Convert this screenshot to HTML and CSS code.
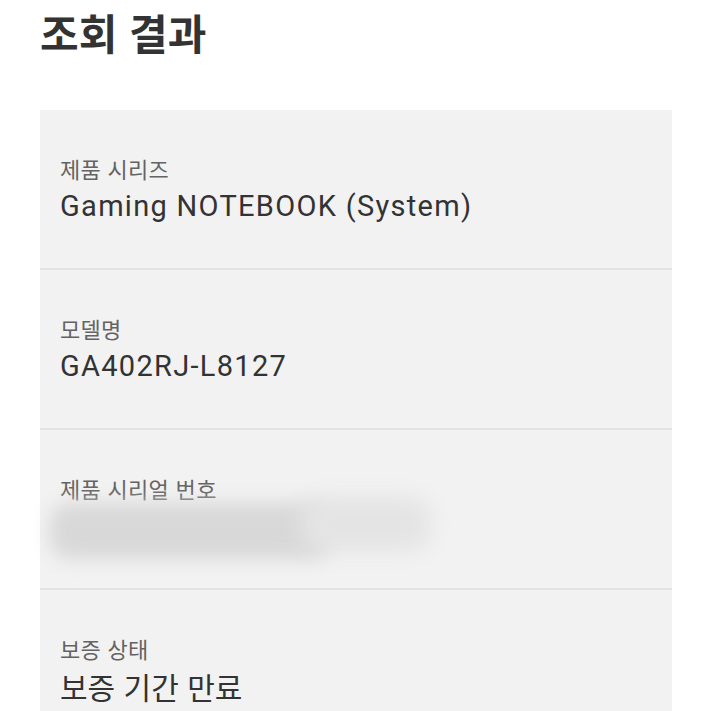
FILE: index.html
```html
<!DOCTYPE html>
<html lang="ko">
<head>
<meta charset="utf-8">
<link rel="stylesheet" href="styles.css">
</head>
<body>
<main class="page">
  <h1 class="title">조회 결과</h1>
  <section class="card">
    <div class="row">
      <div class="label">제품 시리즈</div>
      <div class="value">Gaming NOTEBOOK (System)</div>
    </div>
    <div class="row">
      <div class="label">모델명</div>
      <div class="value">GA402RJ-L8127</div>
    </div>
    <div class="row">
      <div class="label">제품 시리얼 번호</div>
      <div class="value blurred"><span class="blur-a"></span><span class="blur-b"></span></div>
    </div>
    <div class="row last">
      <div class="label">보증 상태</div>
      <div class="value ko">보증 기간 만료</div>
    </div>
  </section>
</main>
</body>
</html>
```

FILE: styles.css
```css
html, body {
  margin: 0;
  padding: 0;
  background: #ffffff;
}
body {
  font-family: Roboto, "Noto Sans CJK KR", sans-serif;
  color: #333333;
  overflow: hidden;
}
.page {
  padding: 0 39px 0 40px;
}
.title {
  margin: 0;
  padding-top: 6px;
  height: 110px;
  box-sizing: border-box;
  font-family: "Noto Sans CJK KR", sans-serif;
  font-size: 42px;
  font-weight: 700;
  line-height: 52px;
  color: #333333;
}
.card {
  background: #f2f2f2;
}
.row {
  height: 160px;
  box-sizing: border-box;
  padding: 43px 20px 0 20px;
  border-bottom: 2px solid #e2e2e2;
}
.row.last {
  height: 121px;
  border-bottom: none;
}
.label {
  font-family: "Noto Sans CJK KR", sans-serif;
  font-size: 22px;
  line-height: 30px;
  letter-spacing: 0.3px;
  color: #636363;
}
.value {
  margin-top: 4px;
  font-family: Roboto, "Noto Sans CJK KR", sans-serif;
  font-size: 29px;
  line-height: 38px;
  letter-spacing: 1.3px;
  color: #333333;
}
.value.ko {
  font-family: "Noto Sans CJK KR", sans-serif;
  font-size: 30px;
  letter-spacing: 0;
}
.blurred {
  position: relative;
  height: 38px;
}
.blur-a {
  position: absolute;
  left: -10px;
  top: -4px;
  width: 280px;
  height: 56px;
  background: #d8d8d8;
  border-radius: 20px;
  filter: blur(9px);
}
.blur-b {
  position: absolute;
  left: 240px;
  top: -10px;
  width: 130px;
  height: 54px;
  background: #e4e4e4;
  border-radius: 20px;
  filter: blur(10px);
}
```
